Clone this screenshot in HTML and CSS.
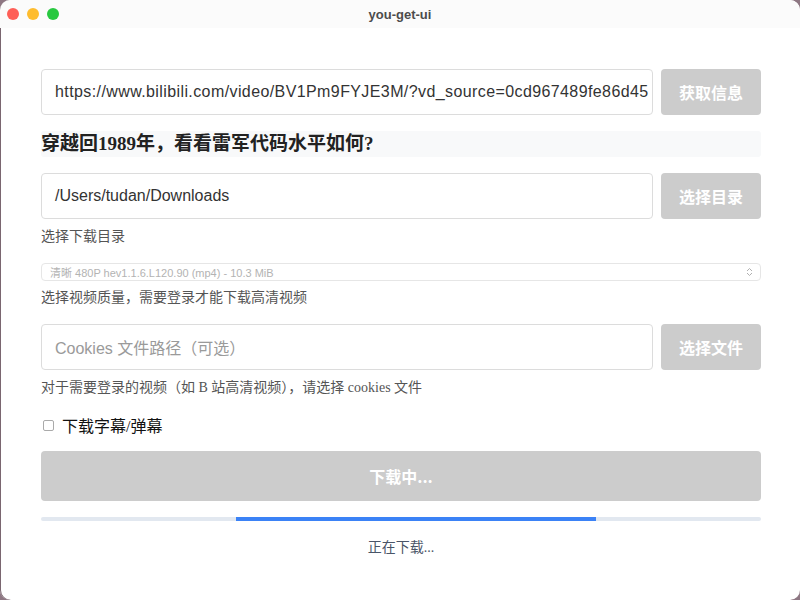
FILE: index.html
```html
<!DOCTYPE html>
<html lang="zh">
<head>
<meta charset="utf-8">
<title>you-get-ui</title>
<link rel="stylesheet" href="styles.css">
</head>
<body>
<div class="window">
  <div class="titlebar">
    <div class="lights">
      <span class="light red"></span>
      <span class="light yellow"></span>
      <span class="light green"></span>
    </div>
    <div class="title">you-get-ui</div>
  </div>
  <div class="content">
    <div class="row">
      <div class="input"><span class="val url">https://www.bilibili.com/video/BV1Pm9FYJE3M/?vd_source=0cd967489fe86d45</span></div>
      <div class="btn">获取信息</div>
    </div>
    <div class="heading">穿越回1989年，看看雷军代码水平如何?</div>
    <div class="row row-dir">
      <div class="input"><span class="val">/Users/tudan/Downloads</span></div>
      <div class="btn">选择目录</div>
    </div>
    <div class="hint">选择下载目录</div>
    <div class="select">
      <span class="sel-text">清晰 480P hev1.1.6.L120.90 (mp4) - 10.3 MiB</span>
      <svg class="chev" width="7" height="10" viewBox="0 0 7 10"><path d="M1 4 L3.5 1.5 L6 4 M1 6 L3.5 8.5 L6 6" fill="none" stroke="#b0b0b0" stroke-width="1"/></svg>
    </div>
    <div class="hint hint-q">选择视频质量，需要登录才能下载高清视频</div>
    <div class="row row-cookie">
      <div class="input"><span class="ph">Cookies 文件路径（可选）</span></div>
      <div class="btn">选择文件</div>
    </div>
    <div class="hint">对于需要登录的视频（如 B 站高清视频），请选择 cookies 文件</div>
    <label class="check"><span class="box"></span><span class="check-text">下载字幕/弹幕</span></label>
    <div class="dl-btn">下载中...</div>
    <div class="progress"><div class="fill" style="margin-left:27.08%;width:50%"></div></div>
    <div class="status">正在下载...</div>
  </div>
</div>
</body>
</html>
```

FILE: styles.css
```css
html, body {
  margin: 0;
  padding: 0;
  width: 800px;
  height: 600px;
  overflow: hidden;
  background: #8e7783;
}
.window {
  width: 800px;
  height: 600px;
  background: #ffffff;
  border-radius: 10px;
  box-shadow: inset 1px 0 0 #7a6670;
  overflow: hidden;
  font-family: "Liberation Sans", "Noto Sans CJK SC", sans-serif;
}
.titlebar {
  height: 28px;
  background: #fbfbfb;
  display: flex;
  align-items: center;
  justify-content: center;
  position: relative;
}
.lights {
  position: absolute;
  left: 7px;
  top: 8px;
  display: flex;
  gap: 8px;
}
.light {
  width: 12px;
  height: 12px;
  border-radius: 50%;
  display: block;
}
.red { background: #fe5f57; }
.yellow { background: #febc2e; }
.green { background: #28c840; }
.title {
  font-size: 13px;
  font-weight: bold;
  color: #4c4c4c;
  font-family: "Liberation Sans", "Noto Sans CJK SC", sans-serif;
}
.content {
  padding: 41px 39px 0 41px;
  display: flex;
  flex-direction: column;
}
.row {
  display: flex;
  gap: 8px;
  height: 46px;
}
.input {
  flex: 1;
  min-width: 0;
  box-sizing: border-box;
  border: 1px solid #dcdcdc;
  border-radius: 4px;
  display: flex;
  align-items: center;
  padding: 0 0 0 13px;
  overflow: hidden;
  white-space: nowrap;
  font-size: 16px;
  color: #333;
}
.url { letter-spacing: 0.4px; }
.ph { color: #9a9a9a; }
.btn {
  width: 100px;
  flex: none;
  background: #cccccc;
  color: #ffffff;
  border-radius: 4px;
  font-weight: bold;
  font-size: 16px;
  display: flex;
  align-items: center;
  justify-content: center;
  font-family: "Noto Sans CJK SC", sans-serif;
}
.heading {
  margin-top: 16px;
  height: 26px;
  background: #f8f9fa;
  border-radius: 3px;
  font-family: "Liberation Serif", "Noto Sans CJK SC", serif;
  font-weight: bold;
  font-size: 19px;
  color: #222;
  line-height: 26px;
}
.row-dir { margin-top: 16px; }
.hint {
  font-family: "Liberation Serif", "Noto Sans CJK SC", serif;
  font-size: 14px;
  color: #555;
  height: 20px;
  line-height: 20px;
  margin-top: 8px;
}
.select {
  margin-top: 16px;
  height: 18px;
  box-sizing: border-box;
  border: 1px solid #e6e6e6;
  border-radius: 4px;
  display: flex;
  align-items: center;
  justify-content: space-between;
  padding: 0 7px 0 8px;
  font-size: 11px;
  color: #b3b3b3;
}
.hint-q { margin-top: 7px; }
.row-cookie { margin-top: 16px; }
.check {
  margin-top: 17px;
  display: flex;
  align-items: center;
  height: 20px;
  gap: 8px;
  padding-left: 2px;
}
.box {
  width: 11px;
  height: 11px;
  box-sizing: border-box;
  border: 1px solid #aaa;
  border-radius: 2px;
  background: #fff;
}
.check-text {
  font-family: "Liberation Serif", "Noto Sans CJK SC", serif;
  font-size: 16px;
  color: #111;
}
.dl-btn {
  margin-top: 16px;
  height: 50px;
  background: #cccccc;
  border-radius: 4px;
  color: #fff;
  font-weight: bold;
  font-size: 16px;
  display: flex;
  align-items: center;
  justify-content: center;
  font-family: "Noto Sans CJK SC", sans-serif;
}
.progress {
  margin-top: 16px;
  height: 4px;
  background: #e2e8f0;
  border-radius: 2px;
  display: flex;
}
.fill {
  height: 4px;
  background: #3b82f6;
}
.status {
  margin-top: 17px;
  text-align: center;
  font-family: "Liberation Serif", "Noto Sans CJK SC", serif;
  font-size: 14px;
  color: #4a5568;
  line-height: 20px;
}
```
